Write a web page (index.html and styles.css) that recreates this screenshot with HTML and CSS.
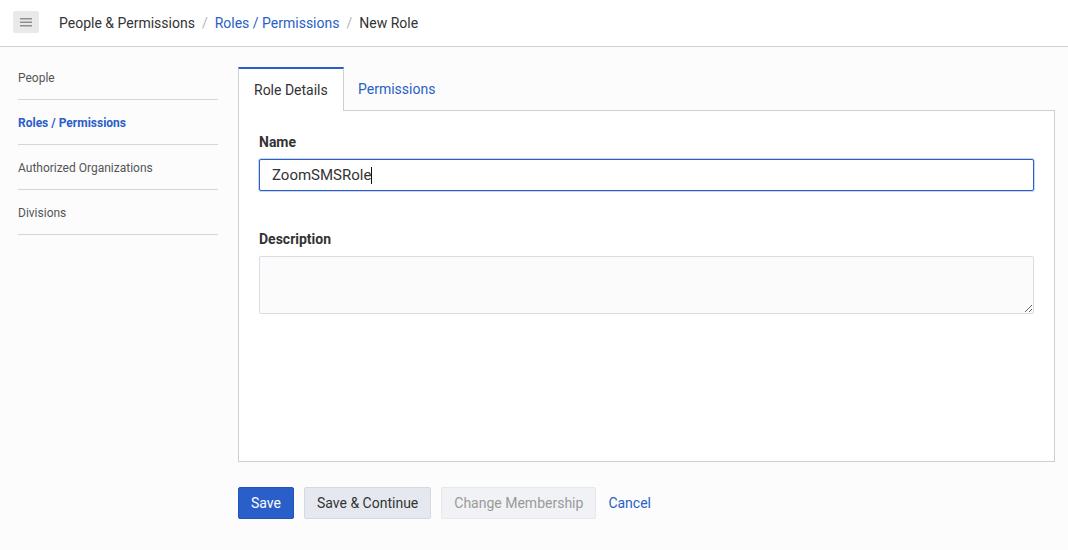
FILE: index.html
```html
<!DOCTYPE html>
<html lang="en">
<head>
<meta charset="utf-8">
<title>New Role</title>
<link rel="stylesheet" href="styles.css">
</head>
<body>
<header class="topbar">
  <button class="menu-btn" aria-label="Menu">
    <svg width="12" height="9" viewBox="0 0 12 9"><rect x="0" y="0" width="12" height="1.5" fill="#8f8f8f"/><rect x="0" y="3.5" width="12" height="1.5" fill="#8f8f8f"/><rect x="0" y="7" width="12" height="1.5" fill="#8f8f8f"/></svg>
  </button>
  <nav class="crumbs">
    <span class="crumb">People &amp; Permissions</span>
    <span class="sep">/</span>
    <a class="crumb link" href="#">Roles / Permissions</a>
    <span class="sep">/</span>
    <span class="crumb">New Role</span>
  </nav>
</header>
<div class="layout">
  <aside class="sidebar">
    <a class="side-item" href="#">People</a>
    <a class="side-item active" href="#">Roles / Permissions</a>
    <a class="side-item" href="#">Authorized Organizations</a>
    <a class="side-item" href="#">Divisions</a>
  </aside>
  <main class="main">
    <div class="tabs">
      <div class="tab active">Role Details</div>
      <div class="tab">Permissions</div>
    </div>
    <section class="panel">
      <label class="field-label">Name</label>
      <div class="input focused"><span>ZoomSMSRole</span><span class="caret"></span></div>
      <label class="field-label desc">Description</label>
      <textarea class="textarea"></textarea>
    </section>
    <div class="actions">
      <button class="btn primary">Save</button>
      <button class="btn secondary">Save &amp; Continue</button>
      <button class="btn disabled">Change Membership</button>
      <a class="cancel" href="#">Cancel</a>
    </div>
  </main>
</div>
</body>
</html>
```
FILE: styles.css
```css
* { box-sizing: border-box; }
html, body { margin: 0; padding: 0; }
body {
  font-family: Roboto, "Liberation Sans", Arial, sans-serif;
  background: #fcfcfc;
  color: #333;
  width: 1068px;
  height: 550px;
  overflow: hidden;
}
a { text-decoration: none; }

.topbar {
  height: 47px;
  background: #fff;
  border-bottom: 1px solid #cfcfcf;
  display: flex;
  align-items: center;
  padding-left: 13px;
}
.menu-btn {
  width: 26px;
  height: 22px;
  border: none;
  border-radius: 2px;
  background: #e9e9e9;
  display: flex;
  align-items: center;
  justify-content: center;
  padding: 0;
  margin-top: -2px;
}
.crumbs {
  margin-left: 20px;
  font-size: 14px;
  display: flex;
  align-items: center;
  color: #333;
  margin-top: 0;
}
.crumb.link { color: #2a5ec8; }
.sep { color: #b5b5b5; margin: 0 7px 0 7px; }

.layout {
  display: flex;
  gap: 20px;
  padding: 0 13px 0 18px;
}
.sidebar {
  width: 200px;
  padding-top: 8px;
  display: flex;
  flex-direction: column;
}
.side-item {
  height: 45px;
  border-bottom: 1px solid #d6d6d6;
  font-size: 12px;
  color: #555;
  display: flex;
  align-items: center;
  padding-top: 2px;
}
.side-item.active { color: #2a5ec8; font-weight: 700; }

.main {
  flex: 1;
  padding-top: 20px;
}
.tabs {
  display: flex;
  height: 43px;
}
.tab {
  font-size: 14px;
  color: #2a5ec8;
  padding: 0 14px 0 14px;
  display: flex;
  align-items: center;
  padding-top: 1px;
}
.tab.active {
  color: #333;
  background: #fff;
  border: 1px solid #cfcfcf;
  border-top: 2px solid #2a5ec8;
  border-bottom: none;
  padding: 0 15px;
  width: 106px;
  position: relative;
  z-index: 1;
  margin-bottom: -1px;
  height: 44px;
}
.panel {
  height: 352px;
  background: #fff;
  border: 1px solid #cfcfcf;
  padding: 23px 20px 0 20px;
  display: flex;
  flex-direction: column;
}
.field-label {
  font-size: 14px;
  font-weight: 700;
  color: #333;
  line-height: 17px;
  margin-bottom: 8px;
}
.field-label.desc { margin-top: 40px; }
.input {
  height: 32px;
  border: 1px solid #2a5ec8;
  border-radius: 2px;
  box-shadow: 0 0 0 1px rgba(42, 94, 200, 0.25);
  padding: 0 12px;
  font-size: 15px;
  color: #333;
  display: flex;
  align-items: center;
  background: #fff;
}
.caret {
  display: inline-block;
  width: 1px;
  height: 17px;
  background: #111;
}
.textarea {
  height: 58px;
  width: 100%;
  border: 1px solid #d9dde6;
  border-radius: 2px;
  background: #fbfbfb;
  resize: vertical;
  font-family: inherit;
  display: block;
}
.actions {
  display: flex;
  align-items: center;
  gap: 10px;
  margin-top: 25px;
}
.btn {
  height: 32px;
  font-family: inherit;
  font-size: 14px;
  border-radius: 2px;
  padding: 0 12px;
  border: 1px solid transparent;
  white-space: nowrap;
}
.btn.primary {
  background: #2a5ec8;
  color: #fff;
  min-width: 56px;
  border-color: #2554b8;
}
.btn.secondary {
  background: #e5e9ef;
  border-color: #d4d9e1;
  color: #333;
}
.btn.disabled {
  background: #f0f2f5;
  border-color: #e5e8ec;
  color: #9a9a9a;
}
.cancel {
  color: #2a5ec8;
  font-size: 14px;
  margin-left: 2px;
}
```
